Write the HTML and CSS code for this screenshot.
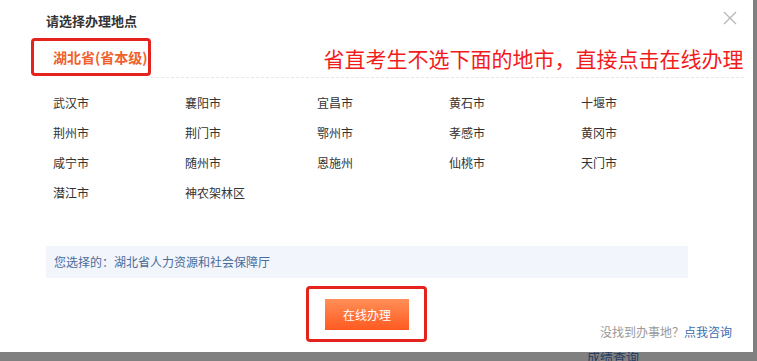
FILE: index.html
```html
<!DOCTYPE html>
<html lang="zh-CN">
<head>
  <meta charset="UTF-8" />
  <meta name="viewport" content="width=device-width, initial-scale=1.0" />
  <title>请选择办理地点</title>
  <link rel="stylesheet" href="styles.css">
</head>
<body>
  <div class="dialog">
    <h3 class="dialog-title">请选择办理地点</h3>
    <a class="close" title="关闭">
      <svg width="14" height="14" viewBox="0 0 14 14"><path d="M1 1L13 13M13 1L1 13" stroke="#b8b8b8" stroke-width="1.4" fill="none"/></svg>
    </a>

    <div class="tabs">
      <div class="mark tab-mark"><span class="tab active">湖北省(省本级)</span></div>
      <div class="tab-line"><span class="note">省直考生不选下面的地市，直接点击在线办理</span></div>
    </div>

    <ul class="cities">
      <li>武汉市</li>
      <li>襄阳市</li>
      <li>宜昌市</li>
      <li>黄石市</li>
      <li>十堰市</li>
      <li>荆州市</li>
      <li>荆门市</li>
      <li>鄂州市</li>
      <li>孝感市</li>
      <li>黄冈市</li>
      <li>咸宁市</li>
      <li>随州市</li>
      <li>恩施州</li>
      <li>仙桃市</li>
      <li>天门市</li>
      <li>潜江市</li>
      <li>神农架林区</li>
    </ul>

    <div class="chosen">您选择的：湖北省人力资源和社会保障厅</div>

    <div class="dialog-foot">
      <div class="mark btn-mark"><button class="btn">在线办理</button></div>
      <p class="help">没找到办事地？<a>点我咨询</a></p>
    </div>
  </div>

  <div class="page-behind">成绩查询</div>
</body>
</html>
```

FILE: styles.css
```css
body {
  margin: 0;
  background: #808080;
  font-family: "Noto Sans CJK SC", "Liberation Sans", sans-serif;
  color: #333;
  overflow: hidden;
}
.dialog {
  position: relative;
  z-index: 1;
  width: 753px;
  height: 352px;
  background: #fff;
  box-sizing: border-box;
  padding-top: 13px;
}
.dialog-title {
  margin: 0 0 0 46px;
  font-size: 13px;
  line-height: 16px;
  font-weight: bold;
  color: #333;
}
.close {
  position: absolute;
  top: 6px;
  right: 16px;
  cursor: pointer;
}
.tabs {
  display: flex;
  align-items: stretch;
  margin: 9px 65px 0 31px;
}
.mark {
  border: 3px solid #e5231c;
  border-radius: 4px;
}
.tab-mark {
  display: flex;
  align-items: center;
  width: 99px;
  height: 32px;
  padding-left: 19px;
}
.tab {
  font-size: 14px;
  font-weight: bold;
  color: #f0612c;
  white-space: nowrap;
}
.tab-line {
  flex: 1;
  display: flex;
  align-items: center;
  border-bottom: 1px dashed #e4e8ee;
  margin-bottom: -2px;
}
.note {
  padding-left: 173px;
  font-size: 21px;
  color: #f21b1b;
  white-space: nowrap;
}
.cities {
  list-style: none;
  margin: 12px 0 0 46px;
  padding: 0 0 0 7px;
  display: grid;
  grid-template-columns: repeat(5, 132px);
  grid-auto-rows: 30px;
}
.cities li {
  font-size: 12px;
  line-height: 30px;
  color: #333;
  cursor: pointer;
}
.chosen {
  margin: 38px 0 0 46px;
  width: 642px;
  height: 32px;
  line-height: 32px;
  padding-left: 8px;
  box-sizing: border-box;
  background: #f2f5fc;
  font-size: 12px;
  color: #4a6c9b;
}
.dialog-foot {
  display: flex;
  margin-top: 8px;
  padding: 0 21px 0 306px;
}
.btn-mark {
  padding: 10px 15px 9px 16px;
  height: 31px;
}
.btn {
  display: block;
  width: 84px;
  height: 31px;
  border: none;
  padding: 0;
  background: linear-gradient(#ff8f58, #ff5a20);
  color: #fff;
  font-family: inherit;
  font-size: 12px;
  cursor: pointer;
}
.help {
  margin: 0 0 2px auto;
  align-self: flex-end;
  font-size: 12px;
  line-height: 16px;
  color: #999;
}
.help a {
  color: #3b6cad;
  cursor: pointer;
}
.page-behind {
  margin-top: -4px;
  padding-left: 587px;
  font-size: 13px;
  line-height: 18px;
  color: #263e63;
}
```
